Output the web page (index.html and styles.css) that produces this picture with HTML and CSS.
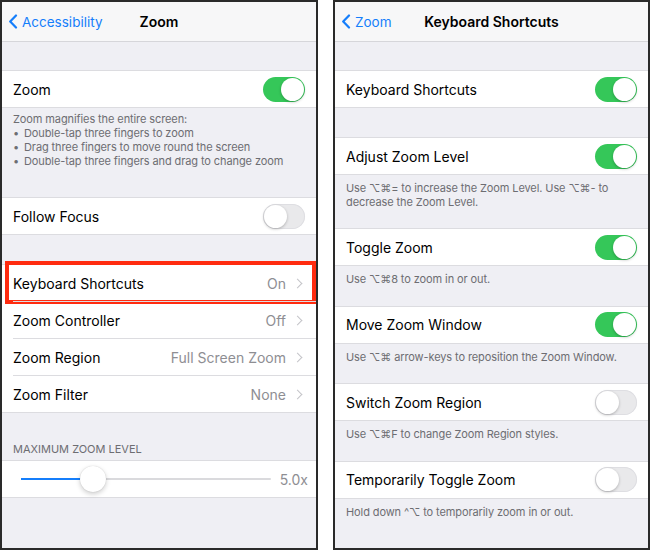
FILE: index.html
```html
<!DOCTYPE html>
<html lang="en">
<head>
  <meta charset="UTF-8" />
  <title>Zoom settings</title>
  <link rel="stylesheet" href="styles.css">
</head>
<body>
  <div class="screens">

    <div class="phone">
      <div class="nav">
        <div class="back">
          <svg width="10" height="15" viewBox="0 0 10 15"><path d="M8 1.5 L2.2 7.5 L8 13.5" fill="none" stroke="#157efb" stroke-width="2.2" stroke-linecap="round" stroke-linejoin="round"/></svg>
          <span>Accessibility</span>
        </div>
        <div class="title">Zoom</div>
      </div>

      <div class="gap"></div>
      <div class="group">
        <div class="row"><span class="label">Zoom</span><span class="switch on"></span></div>
      </div>
      <div class="footer footer-tall">
        Zoom magnifies the entire screen:<br>
        <span class="bullet">•</span>Double-tap three fingers to zoom<br>
        <span class="bullet">•</span>Drag three fingers to move round the screen<br>
        <span class="bullet">•</span>Double-tap three fingers and drag to change zoom
      </div>
      <div class="group">
        <div class="row"><span class="label">Follow Focus</span><span class="switch"></span></div>
      </div>

      <div class="gap gap-mid"></div>
      <div class="group">
        <div class="row highlighted"><span class="label">Keyboard Shortcuts</span><span class="value">On</span><span class="chev"></span></div>
        <div class="row"><span class="label">Zoom Controller</span><span class="value">Off</span><span class="chev"></span></div>
        <div class="row"><span class="label">Zoom Region</span><span class="value">Full Screen Zoom</span><span class="chev"></span></div>
        <div class="row"><span class="label">Zoom Filter</span><span class="value">None</span><span class="chev"></span></div>
      </div>

      <div class="section-head">MAXIMUM ZOOM LEVEL</div>
      <div class="group">
        <div class="row slider-row">
          <div class="slider">
            <div class="track"><div class="fill" style="width: 29%"></div></div>
            <div class="thumb" style="left: 29%"></div>
          </div>
          <span class="value">5.0x</span>
        </div>
      </div>
    </div>

    <div class="phone">
      <div class="nav">
        <div class="back">
          <svg width="10" height="15" viewBox="0 0 10 15"><path d="M8 1.5 L2.2 7.5 L8 13.5" fill="none" stroke="#157efb" stroke-width="2.2" stroke-linecap="round" stroke-linejoin="round"/></svg>
          <span>Zoom</span>
        </div>
        <div class="title">Keyboard Shortcuts</div>
      </div>

      <div class="gap"></div>
      <div class="group">
        <div class="row"><span class="label">Keyboard Shortcuts</span><span class="switch on"></span></div>
      </div>

      <div class="gap gap-small"></div>
      <div class="group">
        <div class="row"><span class="label">Adjust Zoom Level</span><span class="switch on"></span></div>
      </div>
      <div class="footer">Use ⌥⌘= to increase the Zoom Level. Use ⌥⌘- to decrease the Zoom Level.</div>

      <div class="group">
        <div class="row"><span class="label">Toggle Zoom</span><span class="switch on"></span></div>
      </div>
      <div class="footer">Use ⌥⌘8 to zoom in or out.</div>

      <div class="group">
        <div class="row"><span class="label">Move Zoom Window</span><span class="switch on"></span></div>
      </div>
      <div class="footer">Use ⌥⌘ arrow-keys to reposition the Zoom Window.</div>

      <div class="group">
        <div class="row"><span class="label">Switch Zoom Region</span><span class="switch"></span></div>
      </div>
      <div class="footer">Use ⌥⌘F to change Zoom Region styles.</div>

      <div class="group">
        <div class="row"><span class="label">Temporarily Toggle Zoom</span><span class="switch"></span></div>
      </div>
      <div class="footer">Hold down ^⌥ to temporarily zoom in or out.</div>
    </div>

  </div>
</body>
</html>
```

FILE: styles.css
```css
body {
  margin: 0;
  background-color: #fff;
  font-family: Inter, "Open Sans", "DejaVu Sans", sans-serif;
}

.screens {
  display: flex;
  gap: 15px;
}

.phone {
  width: 314px;
  height: 546px;
  border: 2px solid #2a2a2a;
  background-color: #efeff4;
  overflow: hidden;
}

.phone + .phone {
  width: 313px;
}

.nav {
  height: 39px;
  background-color: #f7f7f8;
  border-bottom: 1px solid #d6d6da;
  display: flex;
  align-items: center;
  position: relative;
}

.back {
  display: flex;
  align-items: center;
  gap: 4px;
  padding-left: 6px;
  color: #157efb;
  font-size: 13.5px;
}

.title {
  position: absolute;
  left: 0;
  right: 0;
  text-align: center;
  font-size: 14px;
  font-weight: 600;
  color: #000;
  pointer-events: none;
}

.gap {
  height: 28px;
}

.gap-mid {
  height: 29px;
}

.gap-small {
  height: 29px;
}

.group {
  background-color: #fff;
  border-top: 1px solid #dcdce0;
  border-bottom: 1px solid #dcdce0;
}

.row {
  height: 36px;
  display: flex;
  align-items: center;
  padding: 0 11px;
  position: relative;
  font-size: 14px;
  color: #000;
}

.row + .row {
  border-top: 1px solid #dcdce0;
  margin-left: 11px;
  padding-left: 0;
}

.label {
  flex: 1;
}

.value {
  color: #8e8e93;
}

.chev {
  width: 6px;
  height: 6px;
  border-top: 1.5px solid #c4c4c9;
  border-right: 1.5px solid #c4c4c9;
  transform: rotate(45deg);
  margin-left: 8px;
  margin-right: 4px;
}

.highlighted::after {
  content: "";
  position: absolute;
  left: 3px;
  right: 0;
  top: -4px;
  bottom: -3px;
  border: 4px solid #ff2b0f;
}

.switch {
  width: 42px;
  height: 25px;
  border-radius: 13px;
  background-color: #e9e9eb;
  box-shadow: inset 0 0 0 1px #dedee2;
  position: relative;
}

.switch::after {
  content: "";
  position: absolute;
  top: 1px;
  left: 1px;
  width: 23px;
  height: 23px;
  border-radius: 50%;
  background-color: #fff;
  box-shadow: 0 1px 3px rgba(0,0,0,0.25);
}

.switch.on {
  background-color: #35c759;
  box-shadow: none;
}

.switch.on::after {
  left: 18px;
}

.footer {
  padding: 7px 11px 19px;
  font-size: 11px;
  line-height: 13.5px;
  letter-spacing: -0.1px;
  color: #6d6d72;
}

.footer-tall {
  padding: 4px 11px 29px;
  line-height: 14px;
}

.bullet {
  display: inline-block;
  width: 11px;
}

.section-head {
  padding: 29px 11px 4px;
  font-size: 11px;
  color: #6d6d72;
}

.slider-row {
  padding: 0 8px 0 19px;
}

.slider {
  flex: 1;
  position: relative;
  height: 26px;
  display: flex;
  align-items: center;
  margin-right: 9px;
}

.track {
  width: 100%;
  height: 2px;
  background-color: #dadadd;
  border-radius: 1px;
}

.fill {
  height: 2px;
  background-color: #157efb;
}

.thumb {
  position: absolute;
  top: 0;
  width: 26px;
  height: 26px;
  margin-left: -13px;
  border-radius: 50%;
  background-color: #fff;
  box-shadow: 0 2px 5px rgba(0,0,0,0.2), 0 0 1px rgba(0,0,0,0.2);
}

.slider-row .value {
  font-size: 14px;
}
```
